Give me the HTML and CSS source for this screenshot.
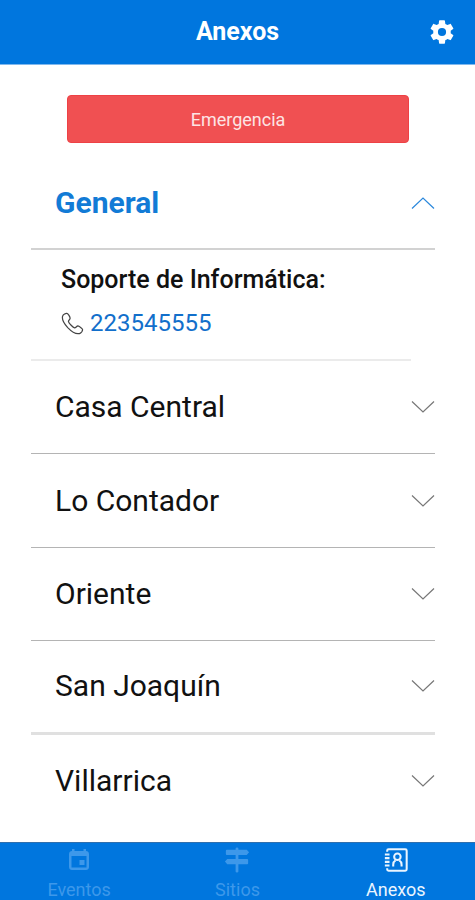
FILE: index.html
```html
<!DOCTYPE html>
<html lang="es">
<head>
<meta charset="utf-8">
<meta name="viewport" content="width=device-width, initial-scale=1">
<title>Anexos</title>
<link rel="stylesheet" href="styles.css">
</head>
<body>
<header class="topbar">
  <h1 class="topbar-title">Anexos</h1>
  <button class="settings" type="button" aria-label="Ajustes">
    <svg class="settings-icon" viewBox="0 0 24 24" aria-hidden="true"><path fill="currentColor" d="M12 15.5A3.5 3.5 0 0 1 8.5 12 3.5 3.5 0 0 1 12 8.500a3.500 3.500 0 0 1 3.500 3.500 3.500 3.500 0 0 1-3.500 3.500m7.430-2.530c.040-.320.070-.640.070-.970s-.030-.660-.070-1l2.110-1.630c.190-.150.240-.420.120-.640l-2-3.460c-.120-.220-.390-.310-.610-.220l-2.490 1c-.520-.390-1.060-.730-1.690-.980l-.370-2.650A.506.506 0 0 0 14 2h-4c-.250 0-.460.180-.500.420l-.370 2.650c-.630.250-1.170.590-1.690.980l-2.490-1c-.220-.090-.490 0-.610.220l-2 3.460c-.130.220-.070.490.120.640L4.570 11c-.040.340-.070.670-.070 1s.030.650.070.970l-2.110 1.660c-.190.150-.250.420-.120.640l2 3.460c.120.220.390.300.610.220l2.490-1.010c.520.400 1.060.740 1.690.990l.370 2.650c.040.240.250.420.500.420h4c.250 0 .460-.180.500-.420l.370-2.650c.630-.260 1.170-.590 1.690-.990l2.490 1.010c.220.080.490 0 .610-.220l2-3.460c.120-.220.070-.490-.120-.640z"/></svg>
  </button>
</header>

<main class="content">
  <button class="emergency" type="button">Emergencia</button>

  <section class="group">
    <button class="row row-open" type="button" aria-expanded="true" aria-controls="general">
      <span>General</span>
      <svg class="chevron" viewBox="0 0 24 12" aria-hidden="true"><path d="M1 11.500 12 1l11 10.500"/></svg>
    </button>
    <div class="panel" id="general">
      <h2 class="contact-name">Soporte de Informática:</h2>
      <a class="phone" href="tel:223545555">
        <svg class="phone-icon" viewBox="0 0 24 24" aria-hidden="true"><path d="M6.300 1.500C5 1.200 2.300 2.500 1.700 4.300 1 6.500 2.600 11.300 7 16.300c4.500 4.700 9.500 6.900 12.300 6.200 1.700-.500 3.300-2.500 3.200-4.200 0-1-3.700-3.600-4.900-3.700-1.300 0-2.200 2.200-3.400 2-1.600-.400-5.900-4.700-6.400-6.500C7.500 9 9.500 7.700 9.500 6.500 9.500 5.200 7.400 1.700 6.300 1.500z"/></svg>
        <span>223545555</span>
      </a>
    </div>
  </section>

  <div class="groups">
    <button class="row" type="button" aria-expanded="false"><span>Casa Central</span><svg class="chevron" viewBox="0 0 24 12" aria-hidden="true"><path d="M1 .500 12 11 23 .500"/></svg></button>
    <button class="row" type="button" aria-expanded="false"><span>Lo Contador</span><svg class="chevron" viewBox="0 0 24 12" aria-hidden="true"><path d="M1 .500 12 11 23 .500"/></svg></button>
    <button class="row" type="button" aria-expanded="false"><span>Oriente</span><svg class="chevron" viewBox="0 0 24 12" aria-hidden="true"><path d="M1 .500 12 11 23 .500"/></svg></button>
    <button class="row row-soft" type="button" aria-expanded="false"><span>San Joaquín</span><svg class="chevron" viewBox="0 0 24 12" aria-hidden="true"><path d="M1 .500 12 11 23 .500"/></svg></button>
    <button class="row row-last" type="button" aria-expanded="false"><span>Villarrica</span><svg class="chevron" viewBox="0 0 24 12" aria-hidden="true"><path d="M1 .500 12 11 23 .500"/></svg></button>
  </div>
</main>

<nav class="tabs">
  <a class="tab" href="#eventos">
    <svg class="tab-icon" viewBox="0 0 24 24" aria-hidden="true"><path fill="currentColor" fill-rule="evenodd" d="M5 1h2.500v2h9V1H19v2c1.700 0 3 1.300 3 3v13c0 1.700-1.300 3-3 3H5c-1.700 0-3-1.300-3-3V6c0-1.700 1.300-3 3-3zM4.500 8v11.500h15V8zM12.500 12H17.500V17h-5z"/></svg>
    <span>Eventos</span>
  </a>
  <a class="tab" href="#sitios">
    <svg class="tab-icon tab-icon-large" viewBox="0 0 28 28" aria-hidden="true"><path fill="currentColor" d="M12.500 1.500q0-1 1.500-1t1.500 1V3H24.500L27 5.700 24.500 8.500H15.500V13H25q1 0 1 1v3.500q0 1-1 1h-9.500v8q0 1-1.500 1t-1.500-1v-8H3.500L1 15.700 3.500 13h9V8.500H3q-1 0-1-1V4q0-1 1-1h9.500z"/></svg>
    <span>Sitios</span>
  </a>
  <a class="tab tab-active" href="#anexos" aria-current="page">
    <svg class="tab-icon tab-icon-large" viewBox="0 0 28 28" aria-hidden="true"><g fill="none" stroke="currentColor" stroke-width="2.200"><path d="M4.500 5V4q0-1.500 1.500-1.500h18q1.500 0 1.500 1.500v20q0 1.500-1.500 1.500H6q-1.500 0-1.500-1.500v-1M2 8h5M2 12h5M2 16h5M2 20h5"/><circle cx="15.500" cy="10.500" r="3.500"/><path d="M11 21v-2q0-3 2.500-4.500M20 21v-2q0-3-2.500-4.500"/></g></svg>
    <span>Anexos</span>
  </a>
</nav>
</body>
</html>
```
FILE: styles.css
```css
* {
  box-sizing: border-box;
}

body {
  margin: 0;
  min-height: 100vh;
  display: flex;
  flex-direction: column;
  background: #fff;
  color: #111;
  font-family: Roboto, "Liberation Sans", sans-serif;
}

button {
  margin: 0;
  border: 0;
  background: none;
  font: inherit;
  color: inherit;
  cursor: pointer;
}

svg {
  display: block;
  flex: none;
}

.topbar {
  height: 65px;
  display: grid;
  grid-template-columns: 1fr auto 1fr;
  align-items: center;
  padding: 0 19px;
  background: #0076de;
  border-bottom: 1px solid #7fb8ee;
  color: #fff;
}

.topbar-title {
  grid-column: 2;
  margin: 0;
  font-size: 25px;
  line-height: 32px;
  font-weight: 700;
}

.settings {
  justify-self: end;
  padding: 0;
}

.settings-icon {
  width: 28px;
  height: 28px;
}

.content {
  flex: 1;
  display: flex;
  flex-direction: column;
  padding: 30px 40px 14px 31px;
}

.emergency {
  height: 48px;
  margin: 0 26px 14px 36px;
  border: 1px solid #ee4145;
  border-radius: 4px;
  background: #f05052;
  color: #fde4e4;
  font-size: 18px;
}

.row {
  width: 100%;
  min-height: 92px;
  display: flex;
  align-items: center;
  justify-content: space-between;
  padding: 0 0 0 24px;
  border-bottom: 1px solid #b4b4b4;
  font-size: 30px;
  line-height: 36px;
  text-align: left;
}

.row-open {
  min-height: 93px;
  border-bottom: 2px solid #d2d2d2;
  color: #127bd6;
  font-weight: 700;
}

.row-soft {
  border-bottom: 3px solid #e0e0e0;
}

.row-last {
  border-bottom: 0;
}

.chevron {
  width: 24px;
  height: 12px;
  fill: none;
  stroke: #777;
  stroke-width: 1.2;
}

.row-open .chevron {
  stroke: #2b88dc;
}

.panel {
  margin-right: 24px;
  padding: 14px 0 18px 30px;
  border-bottom: 2px solid #ebebeb;
}

.contact-name {
  margin: 0 0 9px;
  font-size: 25px;
  line-height: 32px;
  font-weight: 500;
}

.phone {
  display: flex;
  align-items: center;
  gap: 6px;
  color: #126fcb;
  font-size: 24px;
  line-height: 36px;
  text-decoration: none;
}

.phone-icon {
  width: 23px;
  height: 23px;
  fill: none;
  stroke: #444;
  stroke-width: 1.3;
}

.groups {
  flex: 1;
  display: grid;
  grid-auto-rows: 1fr;
}

.tabs {
  height: 58px;
  display: grid;
  grid-template-columns: repeat(3, 1fr);
  background: #0076de;
  border-top: 1px solid #2f6fae;
}

.tab {
  display: flex;
  flex-direction: column;
  align-items: center;
  padding-top: 3px;
  color: #3d98ea;
  font-size: 18px;
  line-height: 20px;
  text-decoration: none;
}

.tab span {
  margin-top: auto;
}

.tab-icon {
  width: 24px;
  height: 28px;
}

.tab-icon-large {
  width: 26px;
}

.tab-active {
  color: #eaf5ff;
}
```
